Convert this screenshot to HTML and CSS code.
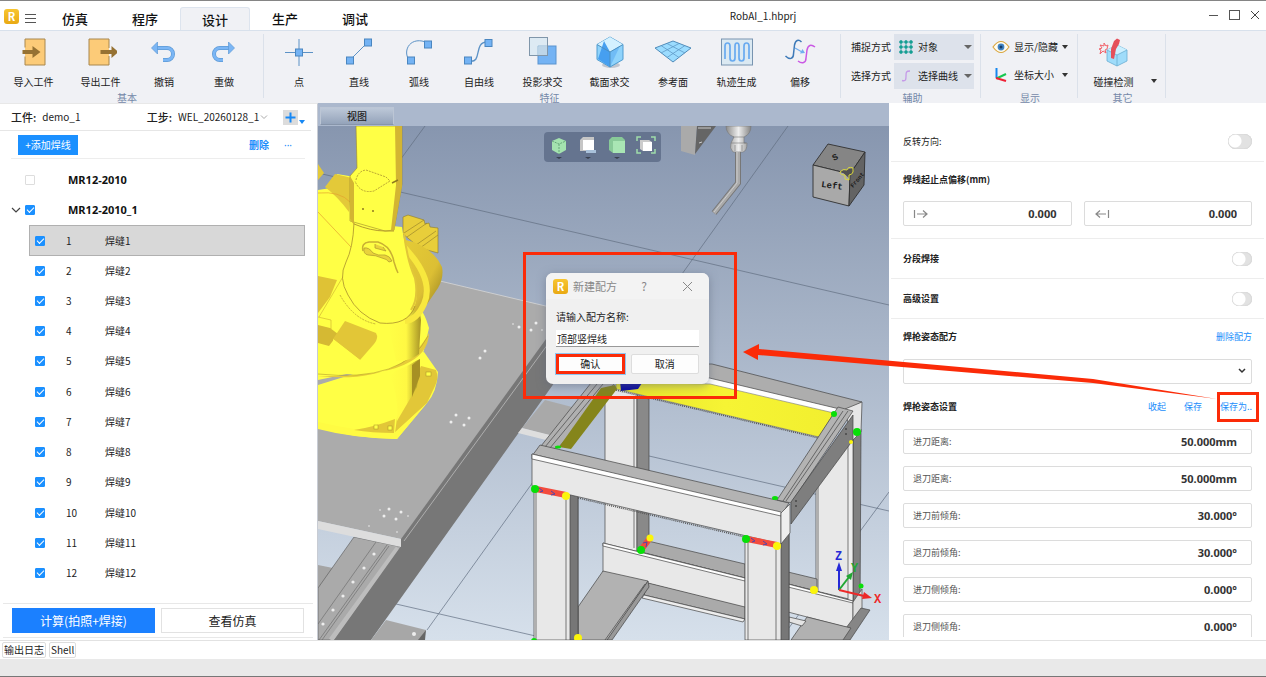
FILE: index.html
```html
<!DOCTYPE html>
<html lang="zh-CN">
<head>
    <meta charset="UTF-8">
    <meta name="viewport" content="width=device-width, initial-scale=1">
    <title>RobAI_1.hbprj</title>
    <link rel="stylesheet" href="styles.css">
</head>
<body>
    <header class="titlebar">
        <div class="brand">
            <span class="logo">R</span>
            <button class="menu-button" aria-label="菜单">
                <svg width="12" height="10" viewBox="0 0 12 10" stroke="#555" stroke-width="1"><path d="M0 1.5h11M0 5.5h11M0 9.5h11"/></svg>
            </button>
        </div>
        <nav class="tabs">
            <button class="tab">仿真</button>
            <button class="tab">程序</button>
            <button class="tab active">设计</button>
            <button class="tab">生产</button>
            <button class="tab">调试</button>
        </nav>
        <h1 class="file-name">RobAI_1.hbprj</h1>
        <div class="window-buttons">
            <button aria-label="最小化"><svg width="10" height="12" viewBox="0 0 10 12" stroke="#555" fill="none"><path d="M0 6.5h9"/></svg></button>
            <button aria-label="最大化"><svg width="11" height="12" viewBox="0 0 11 12" stroke="#555" fill="none"><rect x=".5" y="1.5" width="10" height="9"/></svg></button>
            <button aria-label="关闭"><svg width="10" height="12" viewBox="0 0 10 12" stroke="#444" fill="none"><path d="M1 2l8 8M9 2l-8 8"/></svg></button>
        </div>
    </header>

    <section class="ribbon">
        <div class="group">
            <div class="tools">
                <button class="tool wide">
                    <svg width="32" height="32" viewBox="0 0 32 32"><path d="M7 3h20v26H7v-8.5M7 11.5V3" fill="#fccb78" stroke="#a8874f"/><path d="M4.5 14h10v-4l8 6-8 6v-4h-10z" fill="#967233"/></svg>
                    <span>导入工件</span>
                </button>
                <button class="tool wide">
                    <svg width="32" height="32" viewBox="0 0 32 32"><path d="M24 12V3H4v26h20v-9z" fill="#fccb78"/><path d="M24 12V3H4v26h20v-9" fill="none" stroke="#a8874f"/><path d="M15.5 14h11v-4l7 6-7 6v-4h-11z" fill="#967233"/></svg>
                    <span>导出工件</span>
                </button>
                <button class="tool">
                    <svg width="32" height="32" viewBox="0 0 32 32"><path d="M9 12h10a6 6 0 0 1 0 12h-4" fill="none" stroke="#5d9ad6" stroke-width="4"/><path d="M9 12h10a6 6 0 0 1 0 12h-4" fill="none" stroke="#7bb6f5" stroke-width="2.600"/><path d="M3.5 12l6-6v12z" fill="#7bb6f5" stroke="#5d9ad6" stroke-width=".7"/></svg>
                    <span>撤销</span>
                </button>
                <button class="tool">
                    <svg width="32" height="32" viewBox="0 0 32 32"><path d="M21 12H12a6 6 0 0 0 0 12h3" fill="none" stroke="#5d9ad6" stroke-width="4"/><path d="M21 12H12a6 6 0 0 0 0 12h3" fill="none" stroke="#7bb6f5" stroke-width="2.600"/><path d="M26.5 12l-6-6v12z" fill="#7bb6f5" stroke="#5d9ad6" stroke-width=".7"/></svg>
                    <span>重做</span>
                </button>
            </div>
            <div class="group-name">基本</div>
        </div>

        <div class="group features">
            <div class="tools">
                <button class="tool">
                    <svg width="32" height="32" viewBox="0 0 32 32"><path d="M2 16.5h28M16 3v27" stroke="#5c92c6" fill="none"/><rect x="12.5" y="13" width="7" height="7" fill="#74b3f4" stroke="#4a86c0"/></svg>
                    <span>点</span>
                </button>
                <button class="tool">
                    <svg width="32" height="32" viewBox="0 0 32 32"><path d="M7 24L25 6" stroke="#5c92c6" fill="none"/><g fill="#74b3f4" stroke="#4a86c0"><rect x="3.5" y="21" width="7" height="7"/><rect x="21.5" y="3" width="7" height="7"/></g></svg>
                    <span>直线</span>
                </button>
                <button class="tool">
                    <svg width="32" height="32" viewBox="0 0 32 32"><path d="M6 24C-1 14 8-1 25 7" stroke="#5c92c6" fill="none"/><g fill="#74b3f4" stroke="#4a86c0"><rect x="4.5" y="21" width="7" height="7"/><rect x="21.5" y="5" width="7" height="7"/></g></svg>
                    <span>弧线</span>
                </button>
                <button class="tool">
                    <svg width="32" height="32" viewBox="0 0 32 32"><path d="M6 25c14 3 4-19 18-19" stroke="#5c92c6" fill="none" stroke-width="1.300"/><g fill="#74b3f4" stroke="#4a86c0"><rect x="1.5" y="21" width="7" height="7"/><rect x="22" y="3.5" width="7" height="7"/></g></svg>
                    <span>自由线</span>
                </button>
                <button class="tool wide">
                    <svg width="32" height="32" viewBox="0 0 32 32"><rect x="11" y="10" width="18" height="18" fill="#74b3f4" stroke="#5a94cf"/><rect x="2.5" y="1.5" width="18" height="18" fill="#dbe9f2" fill-opacity=".93" stroke="#8096aa"/><path d="M11 19V10h9" fill="none" stroke="#9cbdd8"/><path d="M11.5 10.5h8.500v8.500h-8.500z" fill="#bdd5e8"/></svg>
                    <span>投影求交</span>
                </button>
                <button class="tool wide">
                    <svg width="32" height="34" viewBox="0 0 32 34"><ellipse cx="17" cy="30" rx="9" ry="3" fill="#bfc5cf"/><path d="M16 2l13 7.500v15L16 32 3 24.500v-15z" fill="#8fd3fb" stroke="#4e9bd0"/><path d="M16 2l13 7.500L16 17 3 9.500z" fill="#d4f1ff"/><path d="M10 6l6 11v15L4 24z" fill="#469ff0"/><path d="M16 17l10-6-10 21z" fill="#70bcf6"/><path d="M3 9.500L16 17l13-7.500M16 17v15" fill="none" stroke="#4d90c0"/></svg>
                    <span>截面求交</span>
                </button>
                <button class="tool">
                    <svg width="38" height="32" viewBox="0 0 38 32"><path d="M19 5l18 7-18 14L1 12z" fill="#9bdcff" stroke="#518cba"/><path d="M7 17L25 7.500M13 21.500L31 9.500M13 7.500L31 17M7 9.500L25 21.500" fill="none" stroke="#5f9bc8" stroke-width=".8"/></svg>
                    <span>参考面</span>
                </button>
                <button class="tool wide">
                    <svg width="34" height="32" viewBox="0 0 34 32"><rect x="1.5" y="3" width="31" height="26" fill="#dbe9f2" stroke="#7894b0"/><path d="M5 23V10q0-3 2.500-3T10 10v12q0 3 2.500 3T15 22V10q0-3 2-3t2 3v12q0 3 2.500 3T24 22V10q0-3 2.500-3T29 10v13" fill="none" stroke="#68aaf0" stroke-width="1.700"/></svg>
                    <span>轨迹生成</span>
                </button>
                <button class="tool">
                    <svg width="32" height="32" viewBox="0 0 32 32"><path d="M1.500 20c4 4 8 3 8-2l1-9c1-5 4-6 7-3" fill="none" stroke="#3e7ab8" stroke-width="1.500"/><path d="M14 25c4 3 8 2 8-3l1-8c1-5 4-6 8-3" fill="none" stroke="#ca58e4" stroke-width="1.500"/><path d="M11 12l7 4" stroke="#72aff0" stroke-width="1.300"/><path d="M21 17l-5 .5 2.500-4.500z" fill="#72aff0"/></svg>
                    <span>偏移</span>
                </button>
            </div>
            <div class="group-name">特征</div>
        </div>

        <div class="group aids">
            <div class="pickers">
                <label for="snap">捕捉方式</label>
                <div class="picker">
                    <svg width="14" height="14" viewBox="0 0 14 14"><path d="M2 0v14M7 0v14M12 0v14M0 2h14M0 7h14M0 12h14" stroke="#4ea9b5"/><g fill="#159f91"><circle cx="2" cy="2" r="1.700"/><circle cx="7" cy="2" r="1.700"/><circle cx="12" cy="2" r="1.700"/><circle cx="2" cy="7" r="1.700"/><circle cx="7" cy="7" r="1.700"/><circle cx="12" cy="7" r="1.700"/><circle cx="2" cy="12" r="1.700"/><circle cx="7" cy="12" r="1.700"/><circle cx="12" cy="12" r="1.700"/></g></svg>
                    <select id="snap"><option>对象</option></select>
                </div>
                <label for="choose">选择方式</label>
                <div class="picker">
                    <svg width="14" height="14" viewBox="0 0 14 14"><path d="M3 11.500c4 1 4-1 4-4.500s0-5 4-5" fill="none" stroke="#c59ae8" stroke-width="1.300"/></svg>
                    <select id="choose"><option>选择曲线</option></select>
                </div>
            </div>
            <div class="group-name">辅助</div>
        </div>

        <div class="group display">
            <div class="stack">
                <button class="line-tool">
                    <svg width="18" height="14" viewBox="0 0 18 14"><path d="M1 7q8-11 16 0-8 11-16 0z" fill="#fffdf2" stroke="#d9a63f" stroke-width="1.200"/><circle cx="9" cy="7" r="3.400" fill="#4184c4"/><circle cx="9" cy="7" r="1.500" fill="#173d66"/></svg>
                    <span>显示/隐藏</span><i class="caret"></i>
                </button>
                <button class="line-tool">
                    <svg width="18" height="16" viewBox="0 0 18 16"><path d="M4.500 1v10" stroke="#1586ee" stroke-width="2"/><path d="M4.500 11.500L14 7" stroke="#17c750" stroke-width="2"/><path d="M4 11l10 3" stroke="#ef2034" stroke-width="2"/></svg>
                    <span>坐标大小</span><i class="caret"></i>
                </button>
            </div>
            <div class="group-name">显示</div>
        </div>

        <div class="group other">
            <div class="tools">
                <button class="tool wide">
                    <svg width="32" height="32" viewBox="0 0 32 32"><path d="M19 9l10 5v11l-10 5-10-5V14z" fill="#9fdcfa" stroke="#69add2" stroke-width=".8"/><path d="M19 9l10 5-10 5-10-5z" fill="#cdf0ff"/><path d="M9 14l10 5 10-5M19 19v11" fill="none" stroke="#69add2" stroke-width=".8"/><path d="M16 5l3-2.500 3 1.500-1 4-3 5-2 10-3-1 0-9z" fill="#e54f5a"/><path d="M2 9l4 1 0-3 2 3 2-1-1 4-2 1 1 3-3-2-3 3 1-4-2-1 3-1z" fill="none" stroke="#f0626b"/></svg>
                    <span>碰撞检测</span>
                </button>
                <i class="caret"></i>
            </div>
            <div class="group-name">其它</div>
        </div>
    </section>

    <main class="workspace">
        <aside class="weld-panel">
            <div class="job-row">
                <b>工件:</b><span>demo_1</span>
                <b class="step">工步:</b><span class="step-name">WEL_20260128_1</span>
                <svg width="8" height="8" viewBox="0 0 8 8"><path d="M1 2.500l3 3 3-3" fill="none" stroke="#aaa"/></svg>
                <button class="add" aria-label="新建工步"><svg width="15" height="15" viewBox="0 0 15 15"><path d="M7.500 2.500v10M2.500 7.500h10" stroke="#1688f5" stroke-width="2"/></svg></button>
                <i class="caret blue"></i>
            </div>
            <div class="weld-actions">
                <button class="primary">+添加焊线</button>
                <button class="remove">删除</button>
                <button class="more">···</button>
            </div>
            <ul class="tree">
                <li class="robot"><span class="fold"></span><input type="checkbox" id="r1"><label for="r1">MR12-2010</label></li>
                <li class="robot"><span class="fold"><svg width="10" height="10" viewBox="0 0 10 10"><path d="M1 3l4 4 4-4" fill="none" stroke="#444" stroke-width="1.200"/></svg></span><input type="checkbox" id="r2" checked><label for="r2">MR12-2010_1</label></li>
                <li class="weld selected"><input type="checkbox" id="w1" checked><label for="w1"><span>1</span>焊缝1</label></li>
                <li class="weld"><input type="checkbox" id="w2" checked><label for="w2"><span>2</span>焊缝2</label></li>
                <li class="weld"><input type="checkbox" id="w3" checked><label for="w3"><span>3</span>焊缝3</label></li>
                <li class="weld"><input type="checkbox" id="w4" checked><label for="w4"><span>4</span>焊缝4</label></li>
                <li class="weld"><input type="checkbox" id="w5" checked><label for="w5"><span>5</span>焊缝5</label></li>
                <li class="weld"><input type="checkbox" id="w6" checked><label for="w6"><span>6</span>焊缝6</label></li>
                <li class="weld"><input type="checkbox" id="w7" checked><label for="w7"><span>7</span>焊缝7</label></li>
                <li class="weld"><input type="checkbox" id="w8" checked><label for="w8"><span>8</span>焊缝8</label></li>
                <li class="weld"><input type="checkbox" id="w9" checked><label for="w9"><span>9</span>焊缝9</label></li>
                <li class="weld"><input type="checkbox" id="w10" checked><label for="w10"><span>10</span>焊缝10</label></li>
                <li class="weld"><input type="checkbox" id="w11" checked><label for="w11"><span>11</span>焊缝11</label></li>
                <li class="weld"><input type="checkbox" id="w12" checked><label for="w12"><span>12</span>焊缝12</label></li>
            </ul>
            <div class="run-row">
                <button class="run">计算(拍照+焊接)</button>
                <button>查看仿真</button>
            </div>
        </aside>

        <section class="view">
            <div class="view-tabs"><button>视图</button></div>
            <div class="canvas">
                <svg class="scene" viewBox="318 126 571 514" preserveAspectRatio="xMidYMid slice">
                    <defs>
                        <linearGradient id="sky" x1="0" y1="0" x2="0" y2="1"><stop offset="0" stop-color="#8796af"/><stop offset="1" stop-color="#d6e0eb"/></linearGradient>
                        <linearGradient id="drum" x1="0" y1="0" x2="1" y2="0"><stop offset="0" stop-color="#ffff45"/><stop offset=".55" stop-color="#fff843"/><stop offset="1" stop-color="#a79326"/></linearGradient>
                        <linearGradient id="motor" x1="0" y1="0" x2="1" y2="1"><stop offset="0" stop-color="#e5cc36"/><stop offset=".6" stop-color="#dcbf34"/><stop offset="1" stop-color="#8f7a20"/></linearGradient>
                        <linearGradient id="steel" x1="0" y1="0" x2="1" y2="0"><stop offset="0" stop-color="#8c8c8c"/><stop offset=".5" stop-color="#eee"/><stop offset="1" stop-color="#858585"/></linearGradient>
                        <linearGradient id="plate" x1="0" y1="0" x2="1" y2="0"><stop offset="0" stop-color="#e6e42c"/><stop offset=".5" stop-color="#f6f434"/><stop offset="1" stop-color="#f2ef2f"/></linearGradient>
                    </defs>
                    <rect x="318" y="126" width="571" height="514" fill="url(#sky)"/>

                    <!-- floor grid -->
                    <path d="M425 126L318 272M318 173L889 305M788 126L427 630M396 604L889 717M889 492L780 640M649 456L889 511" fill="none" stroke="#626f81" stroke-width=".7"/>

                    <!-- positioner table and rail -->
                    <path d="M318 565l15 3-15 22z" fill="#a5a5a5"/>
                    <path d="M354 537l48 10-67 93h-17v-52z" fill="#aaa" stroke="#555" stroke-width=".6"/>
                    <path d="M376 542L318 624M387 545L319 640M389 546L322 640" stroke="#666" stroke-width=".6"/>
                    <path d="M398 548L331 640" stroke="#bdbdbd" stroke-width="5"/>
                    <path d="M546 336l26 22L371 640h-37l67-94v-9z" fill="#777"/>
                    <path d="M404 541L548 344" stroke="#aeaeae" stroke-width="1"/>
                    <path d="M318 252l236 56v20L401 539l-83-18z" fill="#ababab"/>
                    <path d="M440 281l114 27" stroke="#ddd" stroke-width=".7"/>
                    <path d="M318 521l83 18v8l-83-18z" fill="#ddd"/>
                    <path d="M386 620l40 10-3 10h-52z" fill="#a7a7a7"/><path d="M426 630l-1 10h-7z" fill="#666"/>
                    <path d="M545 400l27 7-20 29-30-8z" fill="#a9a9a9"/><path d="M522 428l28 7-4 5-28-7z" fill="#dedede"/>
                    <g fill="#eee">
                        <circle cx="519" cy="327" r="1.500"/><circle cx="536" cy="323" r="1.500"/><circle cx="531" cy="330" r="1.500"/><circle cx="513" cy="324" r=".8"/><circle cx="542" cy="330" r=".8"/>
                        <circle cx="485" cy="351" r="1.500"/><circle cx="480" cy="358" r="1.500"/>
                        <circle cx="456" cy="415" r="1.500"/><circle cx="469" cy="418" r="1.500"/><circle cx="451" cy="422" r="1.500"/><circle cx="464" cy="425" r="1.500"/>
                        <circle cx="389" cy="509" r="1.500"/><circle cx="401" cy="512" r="1.500"/><circle cx="384" cy="516" r="1.500"/><circle cx="396" cy="519" r="1.500"/><circle cx="380" cy="510" r=".8"/><circle cx="408" cy="516" r=".8"/><circle cx="369" cy="526" r=".8"/><circle cx="397" cy="532" r=".8"/>
                        <circle cx="374" cy="554" r="1.600"/><circle cx="364" cy="568" r="1.600"/><circle cx="353" cy="582" r="1.600"/><circle cx="343" cy="596" r="1.600"/><circle cx="333" cy="610" r="1.600"/><circle cx="323" cy="624" r="1.600"/><circle cx="414" cy="634" r="2"/>
                    </g>

                    <!-- robot -->
                    <path d="M318 220h36l60 60v80l-96 20z" fill="#ffff45"/>
                    <path d="M318 385L424 352l14 20q-1 20-11 31l-30 36q-45-1-79-11z" fill="#ffff45"/>
                    <path d="M421 366l15 4q3 8-1 16l-8 17-32 30 2-15z" fill="#e2c738"/>
                    <path d="M427 403l-30 36q-45-1-79-10v-7q38 9 76 11z" fill="#fffb43"/>
                    <path d="M354 430q20-3 41-11l-1 14q-22 0-40-3z" fill="#e2c738"/>
                    <g fill="#ffff45" stroke="#a28d2b" stroke-width=".5"><rect x="374" y="425" width="4" height="4"/><rect x="388" y="426" width="4" height="4"/><rect x="426" y="372" width="5" height="4"/></g>
                    <path d="M397 370l23-11-3 28-20 34q2-25-7-45z" fill="url(#drum)"/>
                    <path d="M412 365l8-6v17l-8 21z" fill="#a69024"/>
                    <path d="M318 370q77 15 105-16l6-26q-8-28-24-29l-87 12z" fill="#ffff45"/>
                    <path d="M318 376q83 9 111-43-1 45-111 43z" fill="#e6cb3a"/>
                    <path d="M318 374q86 9 110-38" fill="none" stroke="#b69e2e" stroke-width=".6"/>
                    <path d="M388 322l30-20 3 18-2 34q-10 8-23 7z" fill="url(#drum)"/>
                    <path d="M403 217l5-2 16 5 1 4 4-1 1 4 8 1v25l-18-5-17-14z" fill="#e8ce3a" stroke="#8d7a27" stroke-width=".6"/>
                    <path d="M404 233l20-13M407 237l20-14M416 245l20-14M420 248l18-13" stroke="#9c872b" stroke-width=".7"/>
                    <path d="M402 239q30 6 40 28 2 11-4 21l-17 25-10-4z" fill="url(#motor)"/>
                    <path d="M397 240q39 37 27 64-7 16-19 17" fill="none" stroke="#f8e83e" stroke-width="6"/>
                    <path d="M318 190l13-2 6-14 18 3-3 50v115l-34 10z" fill="#ffff45"/>
                    <path d="M325 187l10-13 17 4-3 34q-11-15-24-25z" fill="#e3c939"/>
                    <path d="M318 164l6 9-6 7z" fill="#e3c939"/>
                    <path d="M318 193q22-2 32 9M318 212l33 35" fill="none" stroke="#e4a22e" stroke-width=".7"/>
                    <path d="M318 276l19 4-7 17-12 16z" fill="#dfc235"/>
                    <path d="M344 275l-25 42M318 317l13 3 0 9-13-2" fill="none" stroke="#d2b832" stroke-width=".7"/>
                    <path d="M318 325l12 3 8 6-9 12-11-3z" fill="#d5b933"/>
                    <path d="M345 321l31 12q3 5-2 11l-14 16-27-21z" fill="#e2c637"/>
                    <path d="M333 339l27 21-5 10q-4-3-2-8l-20-13z" fill="#ffff45"/>
                    <path d="M340 295q14 25 36 29" fill="none" stroke="#b79f2e" stroke-width=".8" stroke-dasharray="2 1"/>
                    <path d="M354 222q-1 26-8 39-8 16 2 33 10 20 32 28 27 4 35-17 5-15-5-42-6-20-8-36z" fill="#ffff45"/>
                    <path d="M404 233q3 27 11 45 4 20-4 32" fill="none" stroke="#e1c638" stroke-width="2"/>
                    <path d="M354 223q-1 25-8 39-8 16 2 33 10 20 32 28 28 3 35-17" fill="none" stroke="#a98f2c" stroke-width=".8"/>
                    <path d="M363 251q-2-8 6-9h9q13 4 16 20 2 7 4 11" fill="none" stroke="#c9b033" stroke-width="1.500"/>
                    <path d="M364 248q-1 6 4 7 8 0 14 3 5 1 7 4l3-1q-2-5-7-6-7 1-12-2-4-6-9-5z" fill="#e9d23b" stroke="#ad962e" stroke-width=".7"/>
                    <path d="M375 244v4l11 3-3-4" fill="#e9d23b" stroke="#ad962e" stroke-width=".7"/>
                    <path d="M356 126h46v58l-8 46-9 1-35-10v-45l7-8z" fill="#ffff45" stroke="#9a852b" stroke-width=".6"/>
                    <path d="M395 126h7v60l-8 45-3-1 5-45z" fill="#d3b532"/>
                    <path d="M350 176l4 7v42l-4-6z" fill="#d3b532"/>
                    <path d="M356 180q2-9 10-10l20 7 4 4-16 10q-14 3-19-10" fill="none" stroke="#a9922d" stroke-width=".8" stroke-dasharray="2 1"/>
                    <path d="M354 224q17 7 31 7h9" fill="none" stroke="#b69c2e" stroke-width="1"/>
                    <path d="M392 183l6-3M362 209h2M372 211h2" stroke="#8f7a20" stroke-width="1.500"/>

                    <!-- welding torch -->
                    <path d="M681 126h16l-2 29-14-4z" fill="#aaa"/><path d="M697 126h19l-21 28z" fill="#656565"/>
                    <path d="M698 128h13M699 143l3-1" stroke="#ccc" stroke-width="1"/>
                    <path d="M726 126h25q0 8-7 11v6h3q0 8-4 9h-10q-4-4-2-9l3-6q-8-3-8-11z" fill="url(#steel)" stroke="#777" stroke-width=".6"/>
                    <path d="M733 137h11M731 143h15M735 145v6M742 145v6" stroke="#777" stroke-width=".6"/>
                    <path d="M738 152v31l-24 30" fill="none" stroke="#777" stroke-width="6"/><path d="M738 152v31l-24 30" fill="none" stroke="#aaa" stroke-width="4"/><path d="M737 152v31l-23 29" fill="none" stroke="#ccc"/>

                    <!-- orientation cube -->
                    <g stroke="#303030" stroke-width=".9">
                        <path d="M828 144l37 8-15 22-37-9z" fill="#858585"/><path d="M813 165l37 9-1 32-36-9z" fill="#a9a9a9"/><path d="M850 174l15-22-1 33-15 21z" fill="#636363"/>
                    </g>
                    <path d="M841 171l13-3-4 11z" fill="#505050"/><path d="M840 172q3-4 7-2 1-4 6-2v4q-1 3-4 3v5l-4-1v-4q-5 0-5-3z" fill="none" stroke="#dad83d"/>
                    <text class="cube-text" x="821" y="187" transform="rotate(7 821 187)">Left</text>
                    <text class="cube-text" x="834" y="161" transform="rotate(-28 834 161)">S</text>
                    <text class="cube-small" x="853" y="188" transform="rotate(-50 853 188)">Front</text>

                    <!-- workpiece frame -->
                    <g stroke="#454545" stroke-width=".7" stroke-linejoin="round">
                        <path d="M605 388h32v164l-32-8z" fill="#e8e8e8"/><path d="M637 396l12 3v138l-12 15z" fill="#898989"/><path d="M634 396v152" fill="none"/>
                        <path d="M816 480l37-50v170l-37-9z" fill="#e8e8e8"/><path d="M853 432l8-3-1 186-7 6z" fill="#808080"/><path d="M848 438h5v165l-5-2z" fill="#eee"/><path d="M818 470v121" fill="none"/>
                        <path d="M648 541l97 23v14l-108-27z" fill="#aaa"/><path d="M603 543l142 35v30l-142-36z" fill="#e8e8e8"/><path d="M603 543l142 35v3l-142-35z" fill="#fff"/>
                        <path d="M788 572l29 7v12l-29-7z" fill="#aaa"/><path d="M788 584l65 17v28l-65-17z" fill="#e8e8e8"/><path d="M788 584l65 17v2l-65-16z" fill="#fff"/>
                        <path d="M853 602l9-13v22l-9 14z" fill="#ddd"/><path d="M861 608l9 2-20 30h-13z" fill="#868686"/>
                        <path d="M648 583l97 24v12l-101-24z" fill="#aaa"/><path d="M644 595l101 24-2 3-101-24z" fill="#eee"/>
                        <path d="M603 571l45 10-40 59h-30v-33z" fill="#b2b2b2"/><path d="M645 584l-40 56" fill="none"/><path d="M648 581l1 6-37 53h-5z" fill="#999"/>
                        <path d="M807 617l44 11-8 12h-52z" fill="#b1b1b1"/><path d="M789 617l17 4-4 5-13-4z" fill="#e4e4e4"/>
                        <path d="M698 364l14 0 150 38-17 9-147-34z" fill="#adadad"/><path d="M701 376l143 34-5 6-138-32z" fill="#fff"/>
                        <path d="M845 409l17-7-1 30-9 9z" fill="#e6e6e6"/>
                    </g>
                    <path d="M616 382l94 2 124 29-15 24-203-48z" fill="url(#plate)" stroke="#777" stroke-width=".6"/>
                    <path d="M620 381l22 2-4 6-17 2z" fill="#0707a0"/><path d="M616 390l203 48" stroke="#555" stroke-width="1.600" stroke-dasharray="1 1"/>
                    <g stroke="#454545" stroke-width=".7" stroke-linejoin="round">
                        <path d="M591 383h24l-56 64-6 2-12-3z" fill="#b0b0b0"/><path d="M597 384l-52 63M603 384l-53 64" fill="none"/>
                    </g>
                    <path d="M601 388l14-3 2 4-46 60-12-2z" fill="#85851b"/>
                    <g stroke="#454545" stroke-width=".7" stroke-linejoin="round">
                        <path d="M534 480l44 10v150h-44z" fill="#e8e8e8"/><path d="M570 490l8 2v148h-8z" fill="#777"/><path d="M566 490v150M536 486v154" fill="none"/>
                        <path d="M745 530h44v110h-44z" fill="#e8e8e8"/><path d="M781 530h8v110h-8z" fill="#777"/><path d="M776 535v105M748 530v110" fill="none"/>
                        <path d="M540 445l249 58-7 11-250-58z" fill="#b3b3b3"/>
                        <path d="M532 454l249 60v30l-249-58z" fill="#e8e8e8"/><path d="M532 454l249 58v4l-249-57z" fill="#fff"/>
                        <path d="M781 513l9-9v29l-9 11z" fill="#eee"/>
                        <path d="M838 407l15 4-62 92-14-3z" fill="#b3b3b3"/><path d="M848 411l-62 90M843 411l-60 90" fill="none"/><path d="M853 415v25l-62 84v-22z" fill="#7e7e7e"/>
                    </g>
                    <path d="M578 498l167 39" stroke="#555" stroke-width="1.400" stroke-dasharray="1 1"/>
                    <g fill="#222"><circle cx="846" cy="429" r=".8"/><circle cx="846" cy="434" r=".8"/><circle cx="796" cy="501" r=".8"/><circle cx="796" cy="506" r=".8"/></g>
                    <path d="M536 489l30 6M747 539l30 6M641 550l9-12" stroke="#f34b3d" stroke-width="6"/>
                    <path d="M539 488l4 3-3 1M551 491l4 3-4 1M751 538l4 3-3 1M763 541l4 3-4 1M643 543l4-1-1 5" fill="none" stroke="#5144ad"/>
                    <g fill="#08df08"><circle cx="535" cy="489" r="4"/><circle cx="746" cy="539" r="4"/><circle cx="641" cy="550" r="4"/><circle cx="857" cy="432" r="4"/><circle cx="834" cy="414" r="3"/><ellipse cx="775" cy="498" rx="3" ry="2"/><ellipse cx="558" cy="447" rx="3" ry="1.500"/><circle cx="534" cy="641" r="3"/><circle cx="861" cy="586" r="2.500"/></g>
                    <g fill="#fbf50b"><circle cx="566" cy="496" r="4"/><circle cx="777" cy="546" r="4"/><circle cx="650" cy="538" r="3.500"/><circle cx="814" cy="590" r="4"/><circle cx="578" cy="638" r="4"/><circle cx="851" cy="442" r="2"/></g>

                    <!-- axes -->
                    <g fill="none" stroke-width="2"><path d="M839 590v-20" stroke="#2529d7"/><path d="M839 590l10-13" stroke="#22a733"/><path d="M839 590l25 6" stroke="#ed2929"/></g>
                    <path d="M839 562l3 9h-6z" fill="#2529d7"/><path d="M853 572l-2 8-5-4z" fill="#22a733"/><path d="M872 598l-10 1 2-7z" fill="#ed2929"/>
                    <text class="axis z" x="835" y="560">Z</text><text class="axis y" x="851" y="572">Y</text><text class="axis x" x="874" y="603">X</text>
                </svg>

                <div class="view-tools">
                    <button aria-label="视角"><svg width="20" height="24" viewBox="0 0 20 24"><path d="M10 3l7 3v9l-7 4-7-4V6z" fill="#a4e3af"/><path d="M3 6l7 3 7-3M10 9v10" fill="none" stroke="#67a77a" stroke-dasharray="2 1"/><path d="M7 22h6l-3 2z" fill="#39404e"/></svg></button>
                    <button aria-label="实体"><svg width="20" height="24" viewBox="0 0 20 24"><path d="M2 5l3-3h11v11l-3 3H2z" fill="#c6c6c6"/><path d="M5 5h11v10H5z" fill="#fff"/><path d="M8 15h10v3H8z" fill="#a9c1da"/><path d="M7 22h6l-3 2z" fill="#39404e"/></svg></button>
                    <button aria-label="着色"><svg width="20" height="24" viewBox="0 0 20 24"><path d="M2 5l3-3h10l3 3v13H6l-4-3z" fill="#88ca98"/><path d="M6 6h12v12H6z" fill="#a9e6b4"/><path d="M7 22h6l-3 2z" fill="#39404e"/></svg></button>
                    <button aria-label="适应窗口"><svg width="20" height="24" viewBox="0 0 20 24"><path d="M1 6V2h4M15 2h4v4M19 14v4h-4M5 18H1v-4" fill="none" stroke="#9fdcaa" stroke-width="1.500"/><path d="M4 5h9l3 2v9H7l-3-2z" fill="#ccc"/><path d="M7 7h9v9H7z" fill="#fff"/></svg></button>
                </div>

                <div class="callout">
                    <form class="dialog" role="dialog" aria-labelledby="dialog-title" onsubmit="return false">
                        <div class="dialog-title">
                            <span class="logo">R</span>
                            <h2 id="dialog-title">新建配方</h2>
                            <button type="button" class="help">?</button>
                            <button type="button" aria-label="关闭"><svg width="11" height="11" viewBox="0 0 11 11"><path d="M1 1l9 9M10 1l-9 9" stroke="#888"/></svg></button>
                        </div>
                        <label for="recipe-name">请输入配方名称:</label>
                        <input type="text" id="recipe-name" value="顶部竖焊线">
                        <div class="dialog-buttons">
                            <button class="confirm">确认</button>
                            <button type="button">取消</button>
                        </div>
                    </form>
                </div>
            </div>
        </section>

        <aside class="props">
            <div class="switch-line first"><label for="reverse">反转方向:</label><input type="checkbox" class="switch big" id="reverse"></div>
            <div class="prop-section">
                <h3>焊线起止点偏移(mm)</h3>
                <div class="pair">
                    <label class="field"><svg width="16" height="12" viewBox="0 0 16 12"><path d="M1.500 2v8M4 6h10M10 2.500L14 6l-4 3.500" fill="none" stroke="#888" stroke-width="1.200"/></svg><input type="text" value="0.000" aria-label="起点偏移"></label>
                    <label class="field"><svg width="16" height="12" viewBox="0 0 16 12"><path d="M14.500 2v8M12 6H2M6 2.500L2 6l4 3.500" fill="none" stroke="#888" stroke-width="1.200"/></svg><input type="text" value="0.000" aria-label="终点偏移"></label>
                </div>
            </div>
            <div class="switch-line"><label for="segment">分段焊接</label><input type="checkbox" class="switch" id="segment"></div>
            <div class="switch-line"><label for="advanced">高级设置</label><input type="checkbox" class="switch" id="advanced"></div>
            <div class="recipe">
                <div class="head"><label for="recipe">焊枪姿态配方</label><button>删除配方</button></div>
                <div class="recipe-select">
                    <select id="recipe"><option></option></select>
                    <svg width="10" height="8" viewBox="0 0 10 8"><path d="M2 2l3 3 3-3" fill="none" stroke="#333" stroke-width="1.500"/></svg>
                </div>
                <div class="head"><h3>焊枪姿态设置</h3><button>收起</button><button>保存</button><button class="save-as">保存为..</button></div>
                <div class="fields">
                    <label class="field">进刀距离:<input type="text" value="50.000mm"></label>
                    <label class="field">退刀距离:<input type="text" value="50.000mm"></label>
                    <label class="field">进刀前倾角:<input type="text" value="30.000°"></label>
                    <label class="field">退刀前倾角:<input type="text" value="30.000°"></label>
                    <label class="field">进刀侧倾角:<input type="text" value="0.000°"></label>
                    <label class="field">退刀侧倾角:<input type="text" value="0.000°"></label>
                </div>
            </div>
        </aside>

        <svg class="pointer" width="474" height="60" viewBox="0 0 474 60"><path d="M0 10L16 2v5L350 37 474 57 350 41 15 13v5z" fill="#fb2b08"/></svg>
    </main>

    <footer>
        <div class="log-tabs"><button>输出日志</button><button>Shell</button></div>
        <div class="status"></div>
    </footer>
</body>
</html>
```
FILE: styles.css
```css
* {
    box-sizing: border-box;
}
body {
    margin: 0;
    height: 100vh;
    display: flex;
    flex-direction: column;
    overflow: hidden;
    background: #fff;
    color: #222;
    font-family: "Noto Sans CJK SC", "Noto Sans", sans-serif;
    font-size: 10px;
    line-height: 14px;
}
button, input, select {
    font: inherit;
    color: inherit;
}
button {
    padding: 0;
    border: none;
    background: none;
    cursor: pointer;
}
h1, h2, h3, ul {
    margin: 0;
    padding: 0;
    font-size: inherit;
}
svg {
    display: block;
    flex: none;
}

/* title bar */
.titlebar {
    display: flex;
    height: 30px;
    border-top: 1px solid #858585;
}
.brand {
    width: 40px;
    display: flex;
    align-items: center;
    gap: 6px;
    padding: 2px 0 0 4px;
}
.menu-button {
    padding-top: 3px;
}
.logo {
    width: 15px;
    height: 15px;
    flex: none;
    border-radius: 3px;
    background: linear-gradient(#f7c531, #e9a913);
    color: #fff;
    font-size: 11px;
    font-weight: bold;
    line-height: 14px;
    text-align: center;
}
.tabs {
    display: flex;
    align-items: flex-end;
}
.tab {
    width: 70px;
    height: 23px;
    padding-top: 1px;
    font-size: 13px;
    font-weight: 500;
    color: #111;
}
.tab.active {
    border: 1px solid #dde4ee;
    border-bottom: none;
    border-radius: 3px 3px 0 0;
    background: #f0f1f5;
}
.file-name {
    flex: 1;
    font-size: 10px;
    font-weight: normal;
    line-height: 30px;
    text-align: center;
}
.window-buttons {
    width: 130px;
    display: flex;
    justify-content: flex-end;
    align-items: center;
    gap: 10px;
    padding: 0 6px 2px 0;
}

/* ribbon */
.ribbon {
    display: flex;
    height: 73px;
    padding-top: 3px;
    border-top: 1px solid #d8e1ec;
    background: #f0f1f5;
}
.group {
    display: flex;
    flex-direction: column;
    height: 64px;
    padding-right: 9px;
    border-right: 1px solid #dbe1ea;
}
.tools, .pickers, .stack {
    flex: none;
    height: 55px;
}
.tools {
    display: flex;
}
.tool {
    width: 60px;
    display: flex;
    flex-direction: column;
    align-items: center;
    gap: 5px;
}
.tool svg {
    height: 36px;
}
.tool.wide {
    width: 67px;
}
.group-name {
    text-align: center;
    color: #7488a8;
}
.features {
    padding: 0 10px 0 5px;
}
.aids {
    padding: 0 6px 0 10px;
}
.pickers {
    display: grid;
    grid-template-columns: 40px 80px;
    grid-template-rows: 26px 26px;
    gap: 3px;
    align-items: center;
}
.picker {
    height: 26px;
    display: flex;
    align-items: center;
    padding-left: 5px;
    background: #dde2eb;
}
.picker select {
    flex: 1;
    min-width: 0;
    appearance: none;
    padding: 0 0 0 5px;
    border: none;
    background: none;
}
.picker::after, .caret {
    content: "";
    border: 3px solid transparent;
    border-top: 4px solid #333;
    border-bottom: none;
}
.picker::after {
    margin-right: 2px;
    border-width: 4px 4px 0;
    border-top-color: #666;
}
.display {
    padding: 0 9px 0 11px;
}
.stack {
    display: flex;
    flex-direction: column;
    justify-content: space-around;
    width: 76px;
}
.line-tool {
    display: flex;
    align-items: center;
    gap: 4px;
    white-space: nowrap;
}
.line-tool .caret {
    margin-left: auto;
}
.other {
    width: 88px;
    padding: 0 0 0 2px;
}
.other .caret {
    align-self: flex-end;
    margin: 0 0 6px 4px;
}
.group-name {
    position: relative;
    margin-top: 1px;
}
.tools, .pickers, .stack {
    margin-bottom: 1px;
}

/* main area */
.workspace {
    position: relative;
    flex: 1;
    min-height: 0;
    display: grid;
    grid-template-columns: 318px 1fr 377px;
    grid-template-rows: 100%;
}
.weld-panel {
    display: flex;
    flex-direction: column;
    padding-bottom: 2px;
    border-top: 1px solid #e8e8e8;
    border-right: 1px solid #c8ccd4;
}
.job-row {
    display: flex;
    align-items: center;
    height: 27px;
    padding-left: 11px;
    margin-right: 6px;
    border-bottom: 1px solid #e6e6e6;
}
.job-row b {
    margin-right: 6px;
    font-size: 11px;
    font-weight: 500;
}
.job-row .step {
    margin-left: auto;
}
.step-name {
    width: 82px;
    overflow: hidden;
    white-space: nowrap;
}
.add {
    margin: 0 1px 0 15px;
    background: #dcdcdc;
}
.caret.blue {
    margin-right: 6px;
    align-self: flex-end;
    margin-bottom: 6px;
    border-top-color: #1688f5;
}
.weld-actions {
    display: flex;
    align-items: center;
    height: 28px;
    margin: 0 12px 0 11px;
    padding: 0 13px 0 7px;
    border-bottom: 1px solid #ededed;
    color: #1b8dfb;
}
.primary {
    height: 20px;
    width: 60px;
    background: #1b90ff;
    color: #fff;
}
.remove {
    margin: 0 15px 0 auto;
    font-weight: bold;
}
.more {
    font-family: "Noto Sans", sans-serif;
}
.tree {
    flex: 1;
    display: flex;
    flex-direction: column;
    padding: 6px 12px 15px 10px;
    list-style: none;
}
.tree li {
    flex: 1;
    display: flex;
    align-items: center;
    border: 1px solid transparent;
}
.tree input {
    appearance: none;
    width: 10px;
    height: 10px;
    margin: 0;
    border: 1px solid #ddd;
    border-radius: 1px;
    background: #fff;
}
.tree input:checked {
    border-color: #1b90ff;
    background: #1b90ff;
    display: grid;
    place-items: center;
}
.tree input:checked::after {
    content: "";
    width: 6px;
    height: 3px;
    margin-bottom: 2px;
    border: solid #fff;
    border-width: 0 0 1px 1px;
    transform: rotate(-45deg);
}
.fold {
    width: 14px;
}
.robot label {
    margin-left: 33px;
    font-family: "Noto Sans", sans-serif;
    font-size: 11px;
    font-weight: bold;
    color: #111;
}
.tree .weld {
    margin-left: 19px;
    padding-left: 5px;
}
.tree .selected {
    border-color: #b0b0b0;
    background: #d8d8d8;
}
.weld label {
    display: flex;
    margin-left: 21px;
}
.weld label span {
    width: 39px;
}
.run-row {
    display: grid;
    grid-template-columns: 1fr 1fr;
    gap: 6px;
    margin: 0 4px 0 3px;
    padding: 4px 9px;
    border: solid #e8e8e8;
    border-width: 1px 0;
}
.run-row button {
    height: 25px;
    border: 1px solid #e2e2e2;
    font-size: 12px;
}
.run-row .run {
    border-color: #1b80ff;
    background: #1b80ff;
    color: #fff;
}

/* 3D view */
.view {
    display: flex;
    flex-direction: column;
    min-width: 0;
}
.view-tabs {
    height: 23px;
    padding: 4px 2px 0;
    background: #abb8cd;
}
.view-tabs button {
    width: 74px;
    height: 18px;
    border: 1px solid #bcc6d5;
    border-bottom-color: #8795aa;
    background: linear-gradient(#bdc8d8, #94a3ba);
    font-weight: 500;
}
.canvas {
    position: relative;
    flex: 1;
    min-height: 0;
}
.scene {
    position: absolute;
    width: 100%;
    height: 100%;
}
.cube-text, .cube-small {
    font-family: "Liberation Mono", monospace;
    font-size: 9px;
    font-weight: bold;
    fill: #1b1b1b;
}
.cube-small {
    font-size: 6px;
}
.axis {
    font-family: "Liberation Mono", monospace;
    font-size: 12px;
    font-weight: bold;
}
.axis.x { fill: #ed2929; }
.axis.y { fill: #22a733; }
.axis.z { fill: #2529d7; }
.view-tools {
    position: absolute;
    top: 6px;
    right: 228px;
    display: flex;
    gap: 9px;
    padding: 3px 5px;
    border-radius: 4px;
    background: #65748f;
}
.callout {
    position: absolute;
    top: 126px;
    right: 152px;
    width: 214px;
    padding: 18px 25px 12px 20px;
    border: 3px solid #fb2b08;
}
.dialog {
    height: 111px;
    padding: 0 10px;
    border-radius: 7px;
    background: #f0f0f0;
    box-shadow: 0 2px 10px #5c667888;
}
.dialog-title {
    display: flex;
    align-items: center;
    height: 26px;
    margin: 0 -10px 11px;
    padding: 0 16px 0 7px;
    border-radius: 7px 7px 0 0;
    background: #f3f3f3;
    color: #888;
}
.dialog-title h2 {
    margin: 0 auto 0 5px;
    font-size: 11px;
    font-weight: normal;
}
.help {
    margin-right: 35px;
    font-size: 12px;
}
.dialog label {
    display: block;
}
.dialog input {
    width: 100%;
    height: 17px;
    margin: 6px 0 7px;
    padding: 0 1px;
    border: none;
    border-bottom: 1px solid #999;
    background: #fff;
}
.dialog-buttons {
    display: grid;
    grid-template-columns: 1fr 1fr;
    gap: 6px;
}
.dialog-buttons button {
    height: 20px;
    border: 1px solid #ddd;
    border-radius: 2px;
    background: #fdfdfd;
}
.dialog-buttons .confirm {
    border: 3px solid #fb2b08;
    border-radius: 0;
    outline: 1px solid #8fc4ef;
}
.pointer {
    position: absolute;
    top: 239px;
    right: 49px;
    pointer-events: none;
}

/* weld properties */
.props {
    overflow: hidden;
    margin-bottom: 3px;
    padding-top: 19px;
    font-size: 9px;
}
.props h3, .head label, .switch-line label {
    font-size: 9px;
    font-weight: bold;
}
.switch-line {
    display: flex;
    align-items: center;
    justify-content: space-between;
    height: 40px;
    margin: 0 2px;
    padding: 0 12px;
    border-bottom: 1px solid #ededed;
}
.switch-line.first label {
    font-weight: normal;
}
.switch {
    appearance: none;
    width: 20px;
    height: 14px;
    margin: 0;
    border-radius: 7px;
    background: radial-gradient(circle at 7px 7px, #fff 6px, #e2e2e2 7px);
    box-shadow: inset 0 0 1px #aaa;
}
.switch.big {
    width: 24px;
    height: 15px;
    border-radius: 8px;
}
.prop-section {
    margin: 0 2px;
    padding: 11px 12px 12px;
    border-bottom: 1px solid #ededed;
}
.pair {
    display: grid;
    grid-template-columns: minmax(0, 1fr) minmax(0, 1fr);
    gap: 12px;
    margin-top: 14px;
}
.field {
    display: flex;
    align-items: center;
    height: 25px;
    padding: 0 14px 0 9px;
    border: 1px solid #dcdcdc;
    border-radius: 2px;
    color: #555;
    white-space: nowrap;
}
.field input {
    flex: 1;
    min-width: 0;
    padding: 0;
    border: none;
    background: none;
    text-align: right;
    font-family: "Noto Sans", sans-serif;
    font-size: 11px;
    font-weight: bold;
    color: #333;
}
.recipe {
    padding: 11px 14px 0;
}
.head {
    display: flex;
    align-items: center;
    gap: 18px;
    height: 14px;
}
.head > :first-child {
    margin-right: auto;
}
.head button {
    color: #1b8dfb;
}
.recipe-select {
    position: relative;
    margin: 15px 0 16px;
}
.recipe-select select {
    display: block;
    appearance: none;
    width: 100%;
    height: 25px;
    border: 1px solid #dcdcdc;
    border-radius: 2px;
    background: #fff;
}
.recipe-select svg {
    position: absolute;
    top: 8px;
    right: 5px;
    pointer-events: none;
}
.save-as {
    position: relative;
}
.save-as::after {
    content: "";
    position: absolute;
    inset: -8px -7px -8px -3px;
    border: 3px solid #fb2b08;
}
.fields {
    display: grid;
    gap: 12px;
    margin-top: 15px;
}

/* log tabs and status bar */
.log-tabs {
    display: flex;
    gap: 3px;
    height: 19px;
    padding: 1px 2px;
    border-top: 1px solid #e2e2e2;
}
.log-tabs button {
    height: 16px;
    padding: 0 1px;
    border: 1px solid #ddd;
    border-radius: 2px;
}
.status {
    height: 18px;
    border-bottom: 1px solid #777;
    background: #e9e9e9;
}
```
